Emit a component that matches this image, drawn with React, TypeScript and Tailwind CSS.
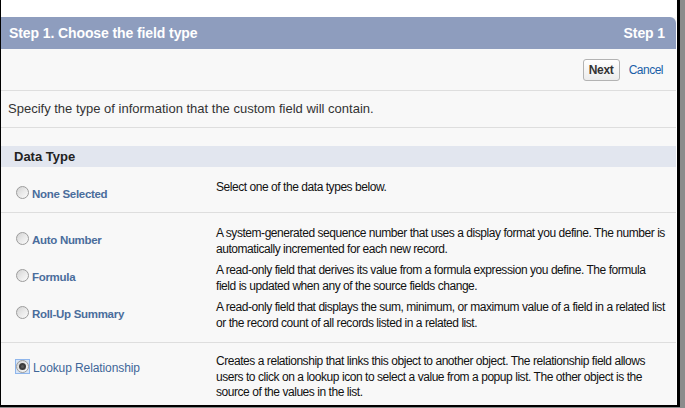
import React from "react";

const font = { fontFamily: '"Liberation Sans", Arial, Helvetica, sans-serif' };

function Radio({ checked = false }: { checked?: boolean }) {
  const circle = (
    <span className="flex h-[13px] w-[13px] shrink-0 items-center justify-center rounded-full border border-[#9c9c9c] bg-gradient-to-br from-[#d2d2d2] via-[#e9e9e9] to-[#fbfbfb]">
      {checked && (
        <span className="flex h-[7px] w-[7px] items-center justify-center rounded-full bg-[#3c3c3c]">
          <span className="h-[3px] w-[3px] rounded-full bg-[#5a5a5a]" />
        </span>
      )}
    </span>
  );
  if (checked) {
    return (
      <span className="-ml-[1px] flex h-[15px] w-[15px] shrink-0 items-center justify-center border border-[#8fb6ec] bg-[#d6e5f8]">
        {circle}
      </span>
    );
  }
  return circle;
}

type Row = { label: string; desc: string; checked?: boolean; bold?: boolean };

function Option({ row }: { row: Row }) {
  return (
    <div className="flex">
      <div className="flex w-[215px] shrink-0 items-start pl-[15px] pt-[4px]">
        <div className="flex items-center gap-[3px]">
          <Radio checked={row.checked} />
          <span
            className={
              row.bold === false
                ? "mt-[4px] text-[12px] leading-[13px] tracking-[-0.1px] text-[#3f6799]"
                : "mt-[4px] text-[11.5px] font-bold leading-[13px] tracking-[-0.3px] text-[#4a6d9c]"
            }
          >
            {row.label}
          </span>
        </div>
      </div>
      <div className="w-[449px] text-[12px] leading-[15.5px] tracking-[-0.45px] text-[#111]">{row.desc}</div>
    </div>
  );
}

export default function App() {
  const group: Row[] = [
    {
      label: "Auto Number",
      desc: "A system-generated sequence number that uses a display format you define. The number is automatically incremented for each new record.",
    },
    {
      label: "Formula",
      desc: "A read-only field that derives its value from a formula expression you define. The formula field is updated when any of the source fields change.",
    },
    {
      label: "Roll-Up Summary",
      desc: "A read-only field that displays the sum, minimum, or maximum value of a field in a related list or the record count of all records listed in a related list.",
    },
  ];

  return (
    <div className="h-[408px] w-[685px] overflow-hidden bg-[#8c8c8c]" style={font}>
      <div className="flex h-[407px] w-[680px] flex-col border-b-2 border-l border-r-[3px] border-black bg-white pt-[17px]">
        <div className="mr-[1px] flex flex-1 flex-col bg-[#f8f8f8]">
          {/* Header */}
          <div className="flex h-[32px] items-center justify-between rounded-tr-[6px] bg-[#8e9dbe] pl-[8px] pr-[11px] text-[14px] font-bold tracking-[-0.1px] text-white">
            <span>Step 1. Choose the field type</span>
            <span>Step 1</span>
          </div>

          {/* Buttons */}
          <div className="flex h-[42px] items-center justify-end gap-[9px] border-b border-[#dedede] pr-[13px]">
            <button className="h-[22px] w-[37px] rounded-[3px] border border-[#b3b3b3] bg-gradient-to-b from-[#ffffff] to-[#ececec] text-[12px] font-bold tracking-[-0.3px] text-[#333]">
              Next
            </button>
            <span className="text-[12px] tracking-[-0.5px] text-[#1a5fa8]">Cancel</span>
          </div>

          {/* Intro */}
          <div className="flex h-[37px] items-center border-b border-[#dedede] pl-[7px] text-[13px] text-[#333]">
            Specify the type of information that the custom field will contain.
          </div>

          {/* Data Type band */}
          <div className="mt-[18px] flex h-[21px] items-center bg-[#e2e6ef] pl-[13px] text-[13px] font-bold text-[#222]">
            Data Type
          </div>

          {/* None Selected */}
          <div className="h-[46px] border-b border-[#dedede] pt-[13px]">
            <Option row={{ label: "None Selected", desc: "Select one of the data types below." }} />
          </div>

          {/* Group */}
          <div className="flex h-[130px] flex-col gap-[6px] border-b border-[#dedede] pt-[13px]">
            {group.map((r) => (
              <Option key={r.label} row={r} />
            ))}
          </div>

          {/* Lookup */}
          <div className="pt-[11px]">
            <Option
              row={{
                label: "Lookup Relationship",
                checked: true,
                bold: false,
                desc: "Creates a relationship that links this object to another object. The relationship field allows users to click on a lookup icon to select a value from a popup list. The other object is the source of the values in the list.",
              }}
            />
          </div>
        </div>
      </div>
    </div>
  );
}
